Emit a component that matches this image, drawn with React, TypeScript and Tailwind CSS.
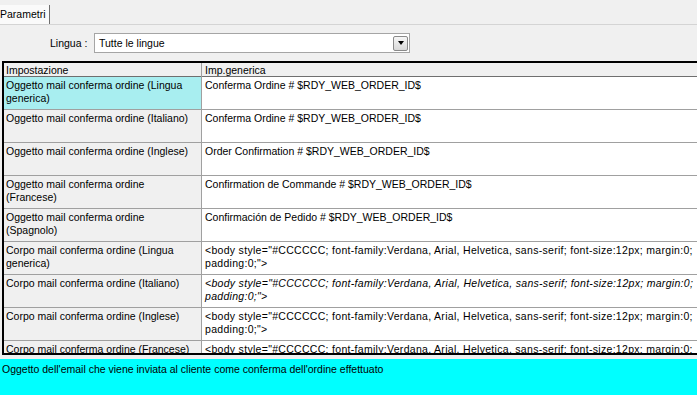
type Row = { label: string[]; value: string[]; italic?: boolean; selected?: boolean; body?: boolean };

const BODY_1 = '<body style="#CCCCCC; font-family:Verdana, Arial, Helvetica, sans-serif; font-size:12px; margin:0;';
const BODY_2 = 'padding:0;">';

const rows: Row[] = [
  { label: ["Oggetto mail conferma ordine (Lingua", "generica)"], value: ["Conferma Ordine # $RDY_WEB_ORDER_ID$"], selected: true },
  { label: ["Oggetto mail conferma ordine (Italiano)"], value: ["Conferma Ordine # $RDY_WEB_ORDER_ID$"] },
  { label: ["Oggetto mail conferma ordine (Inglese)"], value: ["Order Confirmation # $RDY_WEB_ORDER_ID$"] },
  { label: ["Oggetto mail conferma ordine", "(Francese)"], value: ["Confirmation de Commande # $RDY_WEB_ORDER_ID$"] },
  { label: ["Oggetto mail conferma ordine", "(Spagnolo)"], value: ["Confirmación de Pedido # $RDY_WEB_ORDER_ID$"] },
  { label: ["Corpo mail conferma ordine (Lingua", "generica)"], value: [BODY_1, BODY_2], body: true },
  { label: ["Corpo mail conferma ordine (Italiano)"], value: [BODY_1, BODY_2], italic: true, body: true },
  { label: ["Corpo mail conferma ordine (Inglese)"], value: [BODY_1, BODY_2], body: true },
  // ultima riga tagliata dal bordo della griglia
  { label: ["Corpo mail conferma ordine (Francese)"], value: [BODY_1], body: true },
];

function Lines({ lines }: { lines: string[] }) {
  return (
    <>
      {lines.map((l, i) => (
        <div key={i} className="whitespace-nowrap">
          {l}
        </div>
      ))}
    </>
  );
}

export default function App() {
  return (
    <div
      className="w-[697px] h-[395px] overflow-hidden bg-[#f0f0f0] text-[10.5px] leading-[13px] text-black flex flex-col"
      style={{ fontFamily: '"Liberation Sans", Arial, sans-serif' }}
    >
      {/* tab strip */}
      <div className="h-[25px] flex items-end border-b border-[#d4d4d4]">
        <div className="h-[19px] w-[50px] bg-[#fafafa] border-r border-[#6e6e6e] flex items-center">
          Parametri
        </div>
      </div>

      {/* lingua */}
      <div className="h-[36px] flex items-center pl-[50px]">
        <span className="w-[44px]">Lingua :</span>
        <div className="w-[316px] h-[20px] bg-white border border-[#a5a5a5] flex items-center pl-[4px] pr-[1px]">
          <span className="flex-1">Tutte le lingue</span>
          <div className="w-[15px] h-[15px] border border-[#8a8a8a] rounded-[2px] bg-gradient-to-b from-[#f6f6f6] to-[#d8d8d8] flex items-center justify-center">
            <div className="w-0 h-0 border-l-[3px] border-r-[3px] border-t-[4px] border-l-transparent border-r-transparent border-t-black" />
          </div>
        </div>
      </div>

      {/* table */}
      <div className="ml-[2px] h-[294px] shrink-0 border-t-2 border-l-2 border-b-2 border-black overflow-hidden bg-white">
        <div className="grid grid-cols-[198px_1fr] h-[14px] bg-[#f0f0f0] border-b border-[#6f6f6f]">
          <div className="pl-[2px] border-r border-[#a0a0a0] leading-[14px]">Impostazione</div>
          <div className="pl-[3px] leading-[14px]">Imp.generica</div>
        </div>
        {rows.map((r, i) => (
          <div key={i} className="grid grid-cols-[198px_1fr] h-[33px] border-b border-[#a0a0a0]">
            <div
              className={`pl-[2px] pt-[2px] border-r border-[#a0a0a0] ${r.selected ? "bg-[#a8eef0]" : "bg-[#f0f0f0]"}`}
            >
              <Lines lines={r.label} />
            </div>
            <div
              className={`pl-[3px] pt-[2px] overflow-hidden ${r.italic ? "italic" : ""} ${r.body ? "tracking-[0.3px]" : ""}`}
            >
              <Lines lines={r.value} />
            </div>
          </div>
        ))}
      </div>

      {/* description */}
      <div className="mt-[4px] flex-1 bg-[#00ffff] px-[2px] pt-[4px]">
        Oggetto dell'email che viene inviata al cliente come conferma dell'ordine effettuato
      </div>
    </div>
  );
}
